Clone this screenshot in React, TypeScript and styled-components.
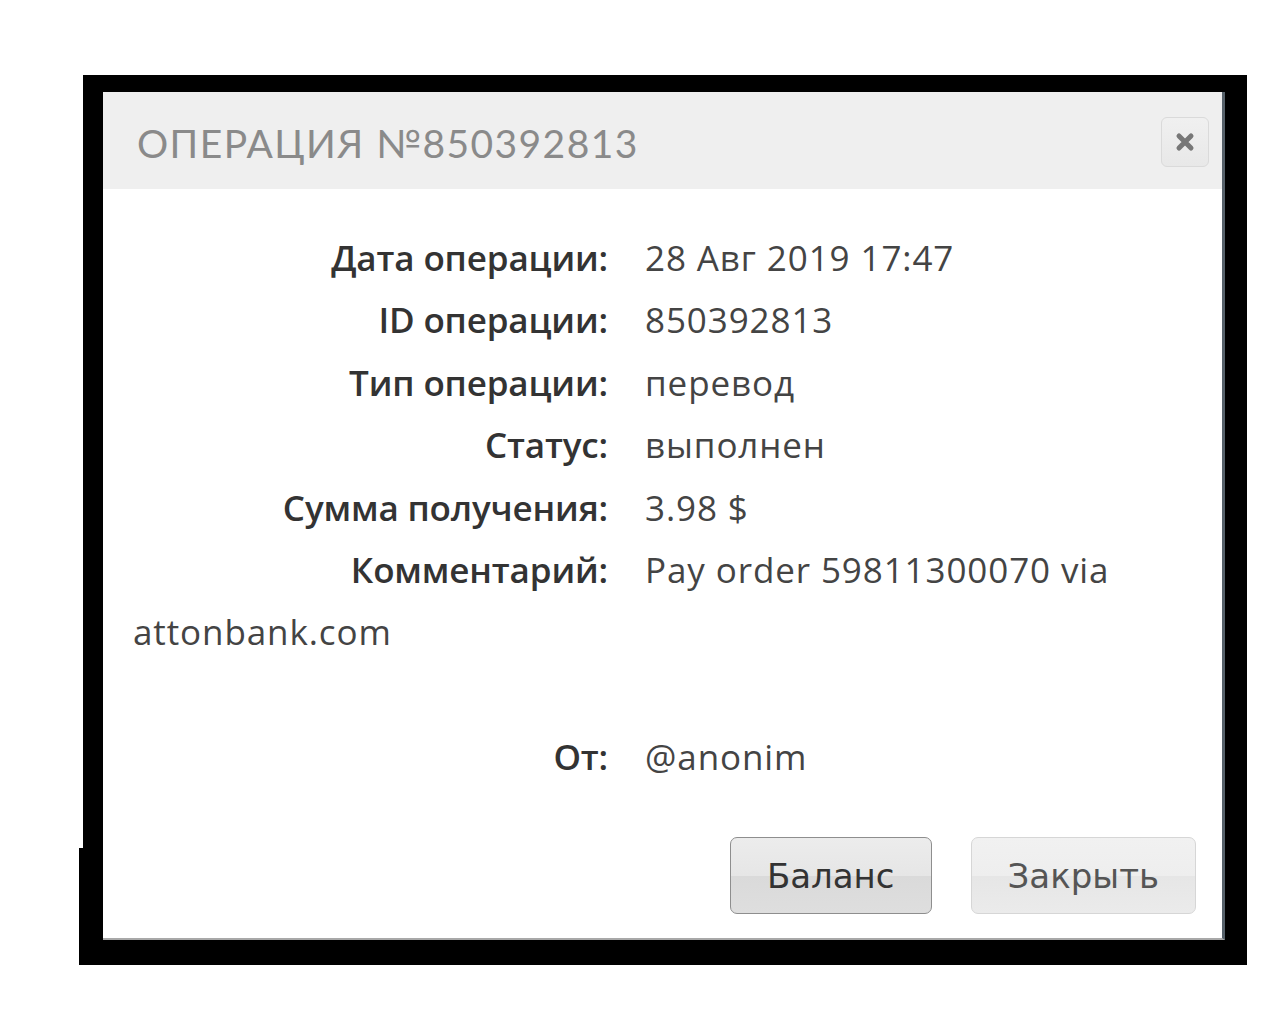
import React from "react";
import styled, { createGlobalStyle } from "styled-components";

const Global = createGlobalStyle`
  html, body { margin: 0; padding: 0; background: #ffffff; }
  body { font-family: "Open Sans", "Liberation Sans", sans-serif; }
  * { box-sizing: border-box; }
`;

const Frame = styled.div`
  position: relative;
  margin: 75px 0 0 83px;
  width: 1164px;
  height: 890px;
  background: #000;
  padding: 17px 22px 25px 20px;
  &::after {
    content: "";
    position: absolute;
    left: -4px;
    top: 773px;
    width: 4px;
    height: 117px;
    background: #000;
  }
`;

const Dialog = styled.div`
  width: 1122px;
  height: 848px;
  background: #fff;
  display: flex;
  flex-direction: column;
  border-right: 3px solid #56616a;
  border-bottom: 2px solid #a8a8a8;
`;

const Header = styled.div`
  height: 97px;
  background: #efefef;
  display: flex;
  align-items: center;
  justify-content: space-between;
  padding: 0 13px 0 34px;
`;

const Title = styled.div`
  font-family: "Lato", "DejaVu Sans", sans-serif;
  font-size: 39px;
  font-weight: 400;
  letter-spacing: 1.4px;
  color: #8a8a8a;
  text-transform: uppercase;
  margin-top: 4px;
`;

const CloseButton = styled.button`
  width: 48px;
  height: 50px;
  border: 1px solid #dadada;
  border-radius: 6px;
  background: linear-gradient(#f0f0f0, #e8e8e8);
  display: flex;
  align-items: center;
  justify-content: center;
  padding: 0;
  margin-top: 2px;
`;

const Body = styled.div`
  padding: 38px 30px 0 30px;
  font-size: 35px;
  line-height: 62.4px;
  color: #444;
`;

const Label = styled.span`
  display: inline-block;
  width: 475px;
  margin-right: 37px;
  text-align: right;
  font-weight: 600;
  color: #333;
  letter-spacing: -0.15px;
`;

const Value = styled.span`
  font-weight: 400;
  color: #444;
  letter-spacing: 0.9px;
`;

const Spacer = styled.div`
  height: 62.4px;
`;

const ButtonPane = styled.div`
  margin-top: auto;
  display: flex;
  justify-content: flex-end;
  gap: 39px;
  padding: 0 26px 24px 0;
`;

const Button = styled.button<{ $active?: boolean }>`
  height: 77px;
  padding: 0 36px;
  border-radius: 7px;
  font-family: "DejaVu Sans", "Liberation Sans", sans-serif;
  font-size: 34px;
  color: ${(p) => (p.$active ? "#333" : "#555")};
  border: 1px solid ${(p) => (p.$active ? "#8e8e8e" : "#d6d6d6")};
  background: ${(p) =>
    p.$active
      ? "linear-gradient(#ececec 0%, #e6e6e6 50%, #dadada 51%, #dedede 100%)"
      : "linear-gradient(#f1f1f1 0%, #eeeeee 50%, #e6e6e6 51%, #ebebeb 100%)"};
`;

const rows: [string, string[]][] = [
  ["Дата операции:", ["28 Авг 2019 17:47"]],
  ["ID операции:", ["850392813"]],
  ["Тип операции:", ["перевод"]],
  ["Статус:", ["выполнен"]],
  ["Сумма получения:", ["3.98 $"]],
  ["Комментарий:", ["Pay order 59811300070 via", "attonbank.com"]],
];

export default function App() {
  return (
    <>
      <Global />
      <Frame>
        <Dialog>
          <Header>
            <Title>Операция №850392813</Title>
            <CloseButton aria-label="close">
              <svg width="20" height="20" viewBox="0 0 20 20">
                <path d="M4 4 L16 16 M16 4 L4 16" stroke="#777" strokeWidth="5" strokeLinecap="round" />
              </svg>
            </CloseButton>
          </Header>
          <Body>
            {rows.map(([l, parts]) => (
              <React.Fragment key={l}>
                <Label>{l}</Label>
                {parts.map((p, i) => (
                  <React.Fragment key={i}>
                    {i > 0 ? " " : null}
                    <Value>{p}</Value>
                  </React.Fragment>
                ))}
                <br />
              </React.Fragment>
            ))}
            <Spacer />
            <Label>От:</Label>
            <Value>@anonim</Value>
          </Body>
          <ButtonPane>
            <Button $active>Баланс</Button>
            <Button>Закрыть</Button>
          </ButtonPane>
        </Dialog>
      </Frame>
    </>
  );
}
